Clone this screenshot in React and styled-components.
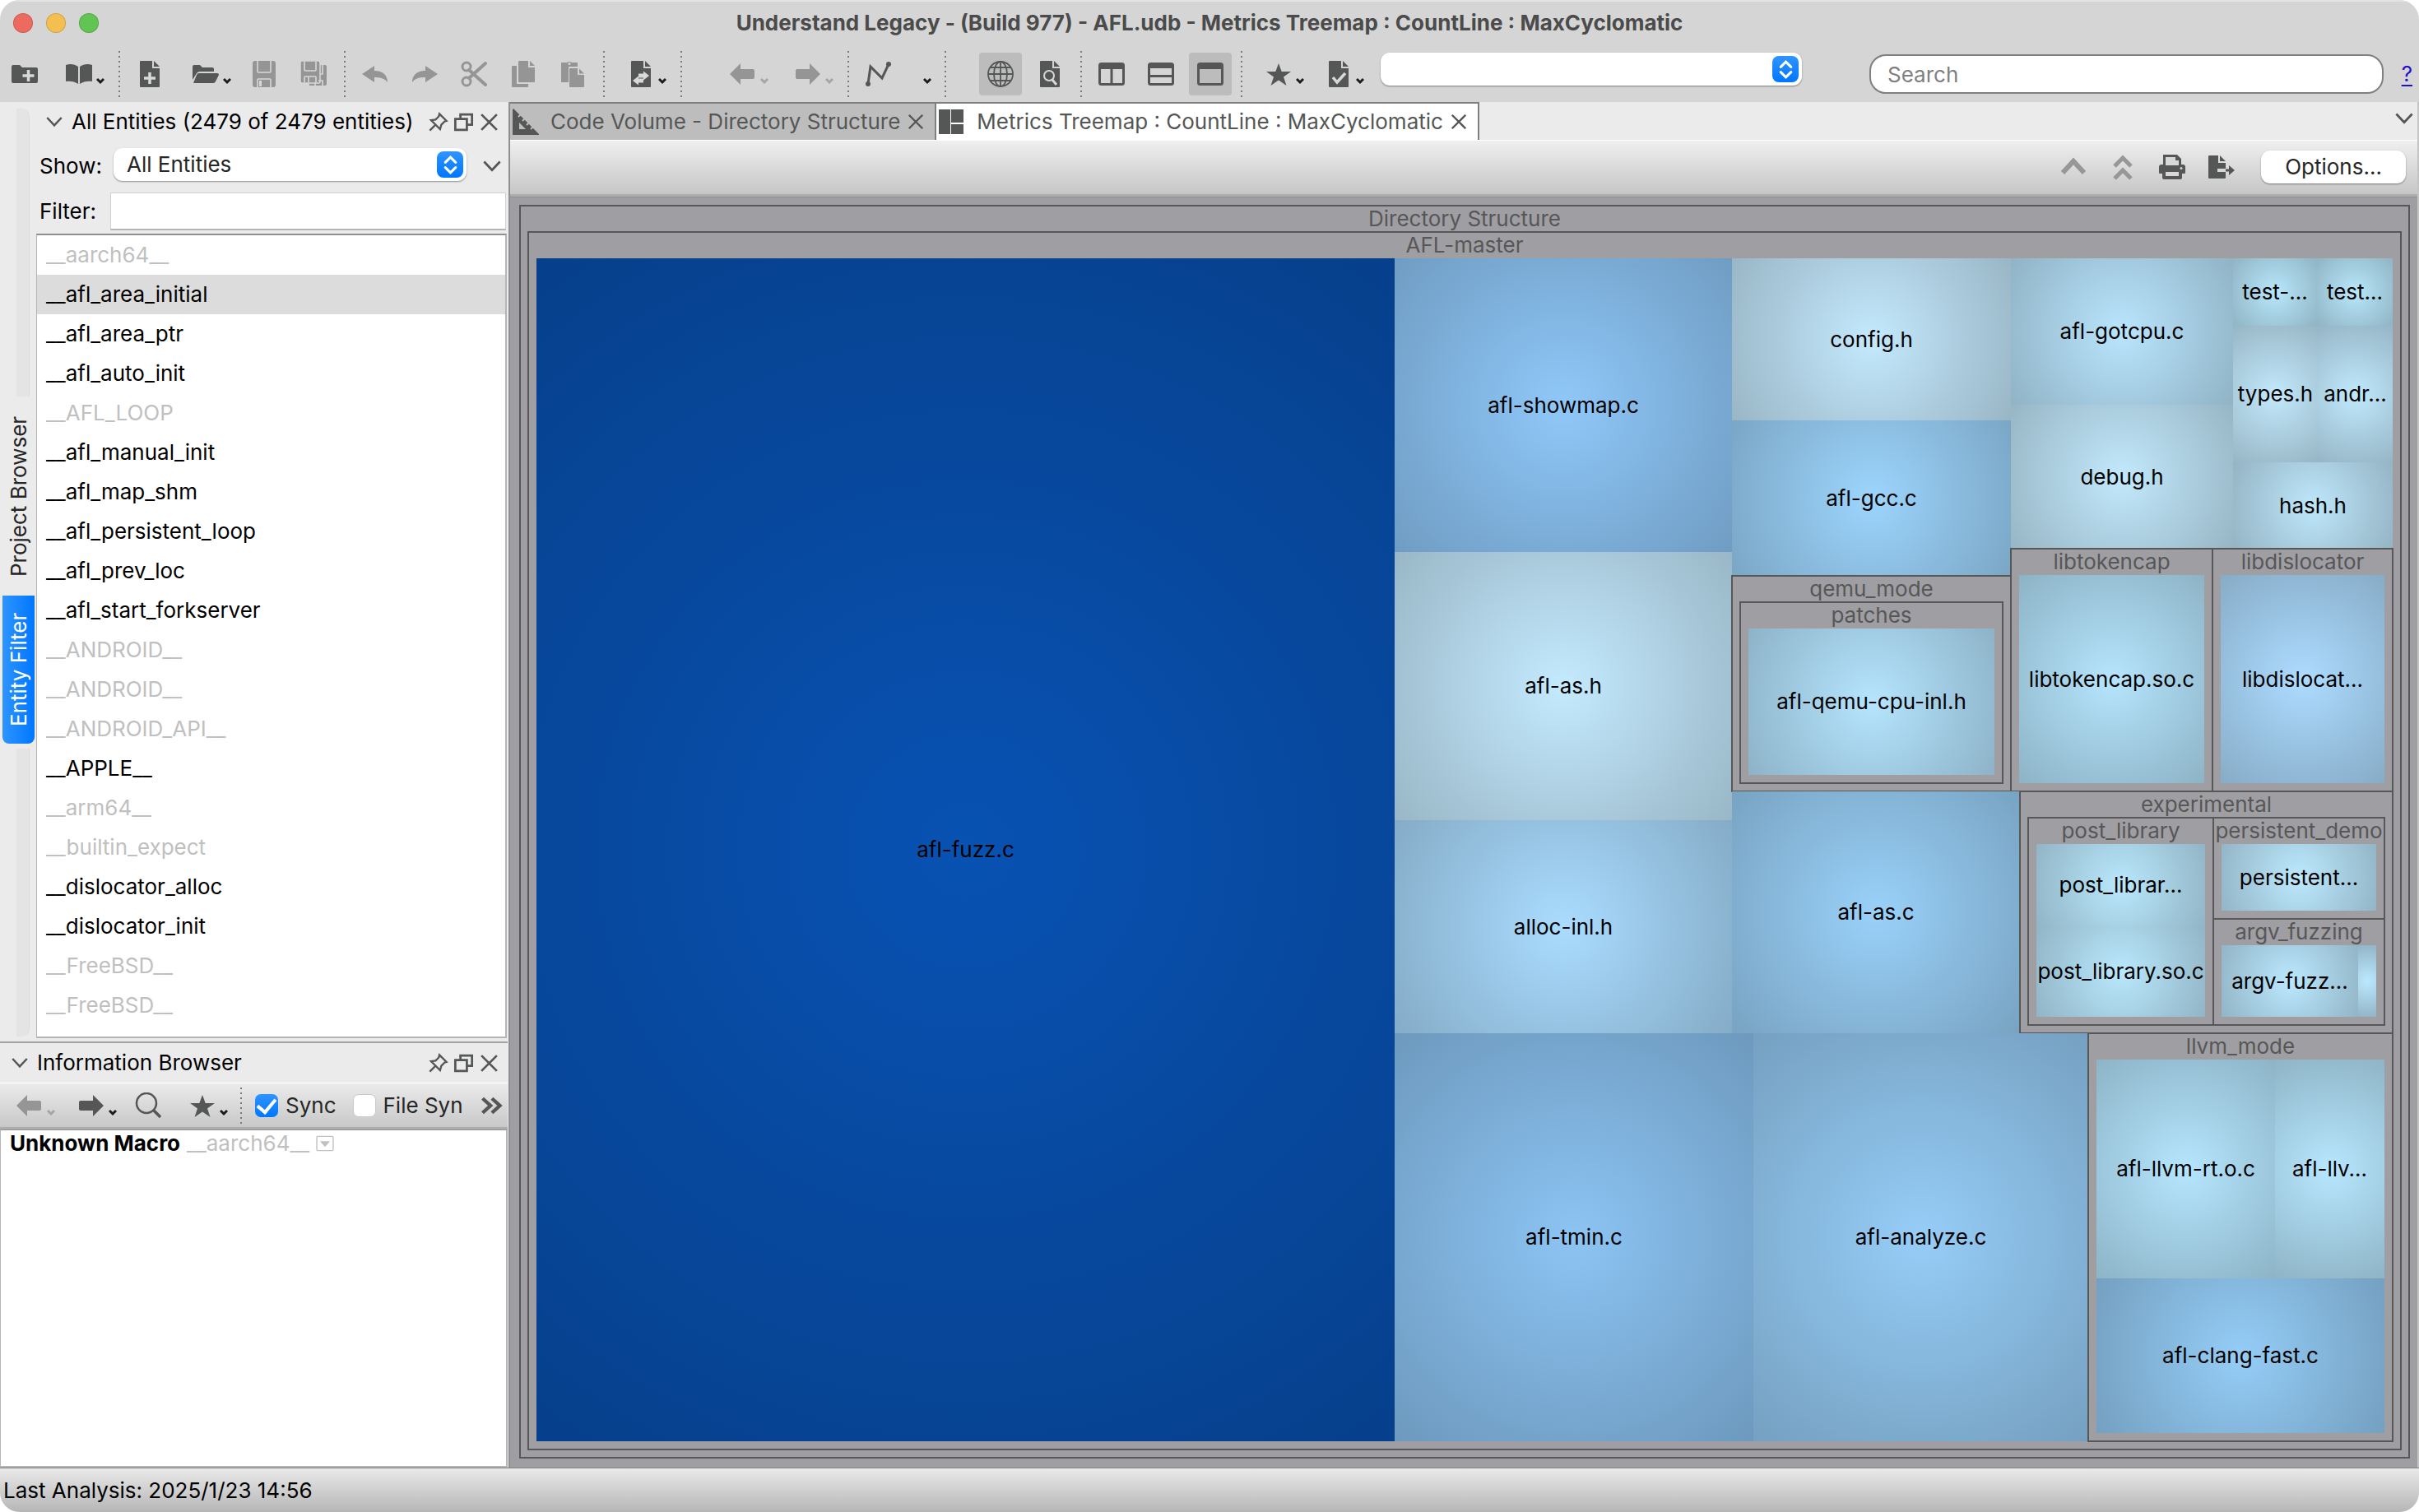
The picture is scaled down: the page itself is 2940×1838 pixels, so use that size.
import React, { useState } from 'react';
import styled, { createGlobalStyle, css } from 'styled-components';


const GlobalStyle = createGlobalStyle`
    * {
        box-sizing: border-box;
    }

    body {
        margin: 0;
        background-color: #ffffff;
        color: #000000;
        font-family: Inter, "Liberation Sans", sans-serif;
        font-size: 26px;
        line-height: 32px;
    }

    button, input, select {
        font: inherit;
        color: inherit;
        margin: 0;
    }
`

const Window = styled.div`
    display: flex;
    flex-direction: column;
    height: 100vh;
    border-radius: 24px;
    overflow: hidden;
    background-color: #ebebeb;
`

/* ---------- title bar and main toolbar ---------- */

const TitleBar = styled.header`
    display: grid;
    grid-template-columns: 1fr auto 1fr;
    align-items: center;
    height: 56px;
    padding: 0 16px;
    background-color: #d5d5d5;
    box-shadow: inset 0 2px 0 #e4e4e4;
`

const Lights = styled.div`
    display: flex;
    gap: 16px;
`

const Light = styled.button`
    width: 24px;
    height: 24px;
    padding: 0;
    border: 1px solid rgba(0, 0, 0, 0.15);
    border-radius: 50%;
    background-color: ${({ $color }) => $color};
`

const Title = styled.h1`
    margin: 0;
    color: #4b4b4b;
    font-size: 26px;
    font-weight: 700;
    line-height: 32px;
    white-space: nowrap;
`

const Toolbar = styled.div`
    display: flex;
    align-items: center;
    height: 68px;
    padding-right: 8px;
    background-color: #d5d5d5;
`

const ToolButton = styled.button`
    display: flex;
    align-items: center;
    gap: 5px;
    flex: none;
    height: 52px;
    padding: 0 ${({ $menu }) => ($menu ? 10 : 14)}px 0 14px;
    border: 0;
    background: none;
    color: ${({ $off }) => ($off ? '#959595' : '#545755')};
`

const PressedButton = styled(ToolButton)`
    margin: 0 4px;
    padding: 0 10px;
    border-radius: 4px;
    background-color: #bcbcbc;
`

const Separator = styled.i`
    flex: none;
    width: 2px;
    height: ${({ $short }) => ($short ? 44 : 56)}px;
    margin: 0 6px 0 7px;
    background: repeating-linear-gradient(#7a7a7a 0 2px, transparent 2px 6px);
`

const Gap = styled.span`
    flex: none;
    width: ${({ $w }) => $w}px;
`

const Svg = styled.svg`
    display: block;
    flex: none;
`

const SelectBox = styled.div`
    position: relative;
    flex: ${({ $wide }) => ($wide ? '0 0 512px' : '1')};
    align-self: ${({ $wide }) => ($wide ? 'flex-start' : 'center')};
    margin-top: ${({ $wide }) => ($wide ? 8 : 0)}px;
    margin-bottom: ${({ $wide }) => ($wide ? 0 : 4)}px;
    height: 40px;

    select {
        appearance: none;
        width: 100%;
        height: 40px;
        padding: 0 48px 0 16px;
        border: 0;
        border-radius: 11px;
        background-color: #ffffff;
        box-shadow: 0 1px 2px rgba(0, 0, 0, 0.4);
        color: #262626;
    }
`

const Stepper = styled.span`
    position: absolute;
    top: 4px;
    right: 4px;
    display: grid;
    place-items: center;
    width: 32px;
    height: 32px;
    border-radius: 8px;
    background: linear-gradient(#2f94ff, #0077ff);
    color: #ffffff;
    pointer-events: none;
`

const SearchInput = styled.input`
    flex: 1;
    min-width: 0;
    height: 48px;
    margin-left: 82px;
    padding: 0 20px;
    border: 2px solid #808080;
    border-radius: 20px;
    background-color: #ffffff;

    &::placeholder {
        color: #7f7f7f;
        opacity: 1;
    }
`

const HelpLink = styled.a`
    margin-left: 22px;
    color: #1f0fc8;
    text-underline-offset: 4px;
`

/* ---------- docks on the left ---------- */

const Body = styled.div`
    flex: 1;
    min-height: 0;
    display: grid;
    grid-template-columns: 620px minmax(0, 1fr);
`

const Docks = styled.aside`
    display: grid;
    grid-template-columns: minmax(0, 1fr);
    grid-template-rows: minmax(0, 1142fr) minmax(0, 518fr);
    min-height: 0;
    padding-right: 1px;
    border-right: 2px solid #8f8f8f;
`

const TopDock = styled.section`
    display: flex;
    min-height: 0;
`

const SideTabs = styled.nav`
    display: flex;
    flex-direction: column;
    flex: none;
    width: 44px;
    padding: 8px 2px 6px 3px;
`

const Track = styled.span`
    flex: 1;
    width: 16px;
    margin-left: 17px;
    border-right: 1px solid #dcdcdc;
    background-color: #e4e4e4;
    border-radius: ${({ $end }) => ($end ? '0 0 10px 0' : '0 10px 0 0')};
`

const SideTab = styled.button`
    writing-mode: vertical-rl;
    transform: rotate(180deg);
    flex: none;
    width: 39px;
    height: ${({ $active }) => ($active ? 180 : 242)}px;
    margin-bottom: ${({ $active }) => ($active ? 6 : 0)}px;
    padding: 0;
    border: 0;
    border-radius: ${({ $active }) => ($active ? '8px 8px 0 0' : '0')};
    background: ${({ $active }) => ($active ? 'linear-gradient(to left, #2f94ff, #0077ff)' : 'none')};
    color: ${({ $active }) => ($active ? '#ffffff' : '#262626')};
    text-align: center;
`

const DockColumn = styled.div`
    display: flex;
    flex-direction: column;
    flex: 1;
    min-width: 0;
    padding-bottom: 4px;
`

const DockHeader = styled.div`
    display: flex;
    align-items: center;
    gap: 6px;
    flex: none;
    height: 48px;
    padding: 0 10px 0 ${({ $inset }) => $inset}px;
    color: #545755;

    h2 {
        flex: 1;
        margin: 0 0 0 5px;
        color: #000000;
        font-size: 26px;
        font-weight: 400;
        line-height: 32px;
        white-space: nowrap;
    }
`

const IconButton = styled.button`
    display: flex;
    flex: none;
    padding: 0;
    border: 0;
    background: none;
    color: #545755;
`

const Field = styled.div`
    display: flex;
    align-items: center;
    flex: none;
    height: ${({ $tall }) => ($tall ? 60 : 50)}px;
    padding: 0 ${({ $tall }) => ($tall ? 8 : 2)}px 0 4px;

    label {
        width: ${({ $tall }) => ($tall ? 90 : 86)}px;
    }
`

const FilterInput = styled.input`
    flex: 1;
    min-width: 0;
    height: 46px;
    padding: 0 8px;
    border: 1px solid #d0d0d0;
    border-bottom: 2px solid #b4b4b4;
    background-color: #ffffff;
`

const EntityList = styled.ul`
    flex: 1;
    min-height: 0;
    margin: 2px 1px 0 0;
    padding: 0;
    border: 2px solid #b5b5b5;
    border-top-color: #8f8f8f;
    border-left-width: 1px;
    background-color: #ffffff;
    list-style: none;
    overflow: hidden;
`

const Entity = styled.li`
    height: 48px;
    padding-left: 11px;
    line-height: 48px;
    color: ${({ $dim }) => ($dim ? '#c0c0c0' : '#000000')};
    background-color: ${({ $selected }) => ($selected ? '#dcdcdc' : 'transparent')};
`

const InfoDock = styled.section`
    display: flex;
    flex-direction: column;
    min-height: 0;
    border-top: 2px solid #a2a2a2;
`

const InfoToolbar = styled.div`
    display: flex;
    align-items: center;
    flex: none;
    height: 57px;
    padding: 0 6px;
    border-top: 1px solid #ffffff;
    border-bottom: 3px solid #adadad;
    background: linear-gradient(#ebebeb, #c8c8c8);
`

const InfoButton = styled(ToolButton)`
    padding: 0 ${({ $menu }) => ($menu ? 8 : 20)}px 0 14px;
`

const CheckLabel = styled.label`
    display: flex;
    align-items: center;
    gap: 9px;
    flex: 0 1 auto;
    margin-right: 20px;
    overflow: hidden;
    white-space: nowrap;
    color: #262626;

    &:first-of-type {
        flex: none;
    }
`

const CheckBox = styled.input`
    appearance: none;
    flex: none;
    display: grid;
    place-items: center;
    width: 28px;
    height: 28px;
    border: 1px solid #c9c9c9;
    border-radius: 7px;
    background-color: #ffffff;

    &:checked {
        border: 0;
        background: linear-gradient(#2f94ff, #0077ff);
    }

    &:checked::after {
        content: '';
        width: 10px;
        height: 18px;
        margin-bottom: 4px;
        border: solid #ffffff;
        border-width: 0 4px 4px 0;
        transform: rotate(40deg);
    }
`

const InfoText = styled.div`
    display: flex;
    align-items: flex-start;
    gap: 8px;
    flex: 1;
    padding: 0 11px;
    border: 2px solid #b5b5b5;
    border-top: 1px solid #8f8f8f;
    border-left-width: 1px;
    background-color: #ffffff;
    color: #c0c0c0;

    strong {
        color: #000000;
    }

    svg {
        margin-top: 5px;
    }
`

/* ---------- document area ---------- */

const Documents = styled.main`
    display: flex;
    flex-direction: column;
    min-width: 0;
    min-height: 0;
    border-right: 2px solid #c4c4c4;
`

const TabBar = styled.div`
    display: flex;
    flex: none;
    height: 47px;
    border-bottom: 1px solid #ffffff;
    color: #545755;
`

const Tab = styled.div`
    display: flex;
    align-items: center;
    padding: 0 12px 0 3px;
    border-top: 2px solid #7f7f7f;
    border-right: 2px solid #7f7f7f;
    background-color: ${({ $active }) => ($active ? '#ffffff' : '#bdbdbd')};
    white-space: nowrap;

    span {
        margin: 0 8px 0 14px;
    }
`

const TabMenu = styled(IconButton)`
    margin: 9px 5px 0 auto;
    align-self: flex-start;
`

const ViewToolbar = styled.div`
    display: flex;
    align-items: center;
    justify-content: flex-end;
    gap: 28px;
    flex: none;
    height: 68px;
    padding: 0 14px 2px 0;
    border-bottom: 3px solid #adadad;
    background: linear-gradient(#efefef, #c6c6c6);
`

const ViewButton = styled(IconButton)`
    color: ${({ $off }) => ($off ? '#979797' : '#545755')};
`

const OptionsButton = styled.button`
    width: 176px;
    height: 40px;
    margin-left: 4px;
    padding: 0;
    border: 0;
    border-radius: 11px;
    background-color: #ffffff;
    box-shadow: 0 1px 2px rgba(0, 0, 0, 0.4);
    color: #262626;
`

const Canvas = styled.div`
    flex: 1;
    min-height: 0;
    display: grid;
    padding: 10px 10px 12px 12px;
    border-top: 1px solid #8f8f8f;
    background-color: #9f9ea3;
`

const Group = styled.div`
    display: grid;
    grid-template-rows: 32px minmax(0, 1fr);
    min-width: 0;
    min-height: 0;
    padding: 0 10px 10px;
    background-color: #9f9ea3;
    outline: 2px solid #565756;
    outline-offset: -1px;
`

const GroupName = styled.div`
    margin: 0 -10px;
    color: #565756;
    text-align: center;
    white-space: nowrap;
`

const Split = styled.div`
    display: grid;
    min-width: 0;
    min-height: 0;
    ${({ $across, $tracks }) => ($across
        ? css`grid-template-columns: ${$tracks}; grid-template-rows: minmax(0, 1fr);`
        : css`grid-template-rows: ${$tracks}; grid-template-columns: minmax(0, 1fr);`)}
`

const Leaf = styled.div`
    display: grid;
    place-items: center;
    min-width: 0;
    min-height: 0;
    overflow: hidden;
    background: radial-gradient(
        circle farthest-corner,
        ${({ $color }) => $color},
        color-mix(in srgb, ${({ $color }) => $color} 78%, #000000)
    );
    white-space: nowrap;
`

const StatusBar = styled.footer`
    flex: none;
    height: 54px;
    padding-left: 4px;
    border-top: 1px solid #7f7f7f;
    background: linear-gradient(#e9e9e9, #b6b6b6);
    line-height: 53px;
`

/* ---------- icons ---------- */

const CUT = '#d8d8d8';

const page = (
    <>
        <path d="M5 0H19V9H28V31a1 1 0 0 1-1 1H5a1 1 0 0 1-1-1V1a1 1 0 0 1 1-1z" />
        <path d="M21 0L28 7H21z" />
    </>
);

const frame = <rect x="1.5" y="3.5" width="29" height="25" rx="2" fill="none" stroke="currentColor" strokeWidth="3" />;

const icons = {
    folderPlus: (
        <>
            <path d="M0 7a2 2 0 0 1 2-2h8l3 3h17a2 2 0 0 1 2 2v15a2 2 0 0 1-2 2H2a2 2 0 0 1-2-2z" />
            <path d="M20.500 11v14M13.500 18h14" stroke={CUT} strokeWidth="3.500" />
        </>
    ),
    book: <path d="M0 5C5 3 11 4 15 7V28C11 25 5 24 0 25zM32 5C27 3 21 4 17 7V28C21 25 27 24 32 25z" />,
    filePlus: <>{page}<path d="M16 14v14M9 21h14" stroke={CUT} strokeWidth="3.500" /></>,
    folderOpen: (
        <>
            <path d="M0 23V7a2 2 0 0 1 2-2h7l3 3h12a2 2 0 0 1 2 2v3H9a5 5 0 0 0-4 2z" />
            <path d="M8 15H30a2 2 0 0 1 2 2l-4 8a3 3 0 0 1-3 2H1L5 17a3 3 0 0 1 3-2z" />
        </>
    ),
    save: (
        <>
            <rect x="2" y="0" width="28" height="32" rx="3" />
            <path d="M8 0V13a1 1 0 0 0 1 1H23a1 1 0 0 0 1-1V0M8 32V23a1 1 0 0 1 1-1H23a1 1 0 0 1 1 1V32" fill="none" stroke={CUT} strokeWidth="1.600" />
            <path d="M10 24h3v7h-3z" fill={CUT} />
        </>
    ),
    saveAll: (
        <>
            <path d="M11 5H30a2 2 0 0 1 2 2V28a2 2 0 0 1-2 2H11z" />
            <rect x="0" y="0" width="24" height="27" rx="2" stroke={CUT} strokeWidth="1.500" />
            <path d="M5 1V11a1 1 0 0 0 1 1H18a1 1 0 0 0 1-1V1M5 26V20a1 1 0 0 1 1-1H18a1 1 0 0 1 1 1V26M10 19V26M27 5V16H24M27 30V24H22M18 30v-4" fill="none" stroke={CUT} strokeWidth="1.600" />
        </>
    ),
    undo: <path d="M0 16L15 6V12C26 12 31 18 31 26C27 21 22 20 15 20V26z" />,
    redo: <path d="M32 16L17 6V12C6 12 1 18 1 26C5 21 10 20 17 20V26z" />,
    cut: (
        <g fill="none" stroke="currentColor">
            <circle cx="7" cy="7" r="5" strokeWidth="3" />
            <circle cx="7" cy="25" r="5" strokeWidth="3" />
            <path d="M10 21L30 3M10 11L30 29" strokeWidth="4" strokeLinecap="round" />
        </g>
    ),
    copy: (
        <>
            <path d="M3 6H8V28H22V31a1 1 0 0 1-1 1H3a1 1 0 0 1-1-1V7a1 1 0 0 1 1-1z" />
            <path d="M11 0H22V8H30V25a1 1 0 0 1-1 1H11a1 1 0 0 1-1-1V1a1 1 0 0 1 1-1z" />
            <path d="M24 0L30 6H24z" />
        </>
    ),
    paste: (
        <>
            <path d="M3 2H9a4 3 0 0 1 6 0H21a1 1 0 0 1 1 1V7H11V26H3a1 1 0 0 1-1-1V3a1 1 0 0 1 1-1z" />
            <circle cx="12" cy="3.500" r="1.500" fill={CUT} />
            <path d="M13 9H22V17H30V31a1 1 0 0 1-1 1H13a1 1 0 0 1-1-1V10a1 1 0 0 1 1-1z" />
            <path d="M24 9.500L30 15.500H24z" />
        </>
    ),
    fileSwap: (
        <>
            {page}
            <path d="M13 15.500h6v-3l7 5.500-7 5.500v-3h-6zM19 26.500h-6v3l-7-5.500 7-5.500v3h6z" fill={CUT} />
        </>
    ),
    back: <path d="M0 16L13 3V10H28a2 2 0 0 1 2 2V20a2 2 0 0 1-2 2H13V29z" />,
    forward: <path d="M31 16L18 3V10H3a2 2 0 0 0-2 2V20a2 2 0 0 0 2 2H18V29z" />,
    graph: (
        <>
            <path d="M3 28L6 7L20 21L28 4" fill="none" stroke="currentColor" strokeWidth="3" />
            <circle cx="3" cy="28" r="3" />
            <circle cx="28" cy="4" r="3" />
        </>
    ),
    globe: (
        <g fill="none" stroke="currentColor" strokeWidth="1.800">
            <circle cx="16" cy="16" r="15" />
            <ellipse cx="16" cy="16" rx="8" ry="15" />
            <path d="M16 1V31M1 16H31M4 8H28M4 24H28" />
        </g>
    ),
    fileSearch: (
        <>
            {page}
            <g fill="none" stroke={CUT} strokeWidth="2">
                <circle cx="15" cy="18" r="6" />
                <path d="M19 23L24 29" strokeWidth="3" />
            </g>
        </>
    ),
    splitV: <>{frame}<path d="M1 3H31V10H1zM14.500 8h3V28h-3z" /></>,
    splitH: <>{frame}<path d="M1 3H31V9H1zM1 17h30v3H1z" /></>,
    single: <>{frame}<path d="M1 3H31V10H1z" /></>,
    star: <path d="M16 3L19.700 13H31L22 19.500L25.500 30L16 23.500L6.500 30L10 19.500L1 13H12.300z" />,
    fileCheck: <>{page}<path d="M9 20L14 26L24 15" fill="none" stroke={CUT} strokeWidth="3.500" /></>,
    search: (
        <g fill="none" stroke="currentColor">
            <circle cx="14" cy="13" r="12" strokeWidth="2.500" />
            <path d="M22 21L31 30" strokeWidth="3.500" />
        </g>
    ),
    up: <path d="M3 23L16 9L29 23" fill="none" stroke="currentColor" strokeWidth="6" />,
    top: <path d="M6 15L16 5L26 15M6 30L16 20L26 30" fill="none" stroke="currentColor" strokeWidth="5" />,
    print: (
        <>
            <path d="M5 1H22L27 6V13H29a3 3 0 0 1 3 3V23a1 1 0 0 1-1 1H28V29a2 2 0 0 1-2 2H6a2 2 0 0 1-2-2V24H1a1 1 0 0 1-1-1V16a3 3 0 0 1 3-3H5z" />
            <path d="M8 4H20V8H24V14H8zM8 22H24V27H8z" fill={CUT} />
            <circle cx="27" cy="17.500" r="1.500" fill={CUT} />
        </>
    ),
    exportFile: (
        <>
            <path d="M1 2H12V11H21V18H11V22H21V29a1 1 0 0 1-1 1H1a1 1 0 0 1-1-1V3a1 1 0 0 1 1-1z" />
            <path d="M14 2L21 9H14zM21 18.500H25V14L32 20L25 26V21.500H21z" />
        </>
    ),
    ruler: (
        <>
            <path fillRule="evenodd" d="M1 0L32 31V32H0V1zM8 17V25H16z" />
            <path d="M7 10L10 7M12 15L15 12M17 20L20 17M22 25L25 22" stroke="#bdbdbd" strokeWidth="2" />
        </>
    ),
    treemap: <path d="M0 1H14V31H0zM15 1H30V17H15zM15 19H30V31H15z" />,
    pin: (
        <g fill="none" stroke="currentColor" strokeWidth="3">
            <path d="M18 3L29 14L26 15L21 20L19 27L5 13L12 12L17 7z" />
            <path d="M12 20L3 29" />
        </g>
    ),
    float: <path d="M11 10V4H29V20H22M3 11H21V28H3z" fill="none" stroke="currentColor" strokeWidth="3.500" />,
    close: <path d="M4 4L28 28M28 4L4 28" fill="none" stroke="currentColor" strokeWidth="3.500" />,
    chevron: <path d="M2 8L16 23L30 8" fill="none" stroke="currentColor" strokeWidth="4" />,
    more: <path d="M4 6L15 16L4 26M17 6L28 16L17 26" fill="none" stroke="currentColor" strokeWidth="5" />,
    updown: <path d="M8 12L16 4L24 12M8 20L16 28L24 20" fill="none" stroke="currentColor" strokeWidth="4" strokeLinecap="round" />,
    box: (
        <>
            <rect x="1.500" y="3.500" width="29" height="25" rx="2" fill="none" stroke="currentColor" strokeWidth="2" />
            <path d="M7 12H25L16 22z" />
        </>
    ),
};

const Icon = ({ name, size = 32 }) => (
    <Svg width={size} height={size} viewBox="0 0 32 32" fill="currentColor" aria-hidden="true">
        {icons[name]}
    </Svg>
);

const Caret = ({ off }) => (
    <Svg width="10" height="32" viewBox="0 0 10 32" fill="none" stroke={off ? '#a5a5a5' : '#1c1c1c'} strokeWidth="3" aria-hidden="true">
        <path d="M1 22L5 26L9 22" />
    </Svg>
);

const Tool = ({ icon, label, off, menu, as: Base = ToolButton }) => (
    <Base type="button" aria-label={label} $off={off} $menu={menu}>
        <Icon name={icon} />
        {menu && <Caret off={off} />}
    </Base>
);

const ToolbarIcon = ({ name, label, off }) => (
    <ViewButton type="button" aria-label={label} $off={off}><Icon name={name} /></ViewButton>
);

/* ---------- data ---------- */

const entities = [
    ['__aarch64__', true],
    ['__afl_area_initial'],
    ['__afl_area_ptr'],
    ['__afl_auto_init'],
    ['__AFL_LOOP', true],
    ['__afl_manual_init'],
    ['__afl_map_shm'],
    ['__afl_persistent_loop'],
    ['__afl_prev_loc'],
    ['__afl_start_forkserver'],
    ['__ANDROID__', true],
    ['__ANDROID__', true],
    ['__ANDROID_API__', true],
    ['__APPLE__'],
    ['__arm64__', true],
    ['__builtin_expect', true],
    ['__dislocator_alloc'],
    ['__dislocator_init'],
    ['__FreeBSD__', true],
    ['__FreeBSD__', true],
    ['__FreeBSD__', true],
];

const leaf = (size, name, color) => ({ size, name, color });
const group = (size, name, child) => ({ size, name, child });
const row = (size, ...items) => ({ size, items, across: true });
const column = (size, ...items) => ({ size, items });

const tree = group(1, 'Directory Structure', group(1, 'AFL-master', row(1,
    leaf(1043, 'afl-fuzz.c', '#0852b3'),
    column(1213,
        row(942,
            column(410,
                leaf(357, 'afl-showmap.c', '#8fc8f9'),
                leaf(326, 'afl-as.h', '#c4eafe'),
                leaf(259, 'alloc-inl.h', '#aadcff'),
            ),
            column(803,
                row(648,
                    column(339,
                        leaf(197, 'config.h', '#c4e9fd'),
                        leaf(189, 'afl-gcc.c', '#9dd5fd'),
                        group(262, 'qemu_mode', group(1, 'patches',
                            leaf(1, 'afl-qemu-cpu-inl.h', '#b5e5ff'))),
                    ),
                    column(464,
                        row(353,
                            column(270,
                                leaf(178, 'afl-gotcpu.c', '#b9e5fd'),
                                leaf(175, 'debug.h', '#c2e9fc'),
                            ),
                            column(194,
                                row(82,
                                    leaf(102, 'test-...', '#b8e7fb'),
                                    leaf(92, 'test...', '#b8e7fb'),
                                ),
                                row(166,
                                    leaf(103, 'types.h', '#c2e9fc'),
                                    leaf(91, 'andr...', '#c0e9fd'),
                                ),
                                leaf(105, 'hash.h', '#bee7fb'),
                            ),
                        ),
                        row(295,
                            group(245, 'libtokencap', leaf(1, 'libtokencap.so.c', '#b5e5fd')),
                            group(219, 'libdislocator', leaf(1, 'libdislocat...', '#addcff')),
                        ),
                    ),
                ),
                row(294,
                    leaf(350, 'afl-as.c', '#9ad1f9'),
                    group(453, 'experimental', row(1,
                        group(225, 'post_library', column(1,
                            leaf(100, 'post_librar...', '#bae8fd'),
                            leaf(110, 'post_library.so.c', '#bae8fd'),
                        )),
                        column(208,
                            group(123, 'persistent_demo', leaf(1, 'persistent...', '#bce9fe')),
                            group(129, 'argv_fuzzing', row(1,
                                leaf(166, 'argv-fuzz...', '#bbe8fe'),
                                leaf(22, '', '#bbe8fe'),
                            )),
                        ),
                    )),
                ),
            ),
        ),
        row(496,
            leaf(436, 'afl-tmin.c', '#8cc4f3'),
            leaf(407, 'afl-analyze.c', '#96cdf7'),
            group(370, 'llvm_mode', column(1,
                row(266,
                    leaf(217, 'afl-llvm-rt.o.c', '#b5e6fe'),
                    leaf(133, 'afl-llv...', '#b7e7fe'),
                ),
                leaf(188, 'afl-clang-fast.c', '#95cdf7'),
            )),
        ),
    ),
)));

const TreeNode = ({ node }) => {
    if (node.items) {
        return (
            <Split $across={node.across} $tracks={node.items.map((n) => `minmax(0, ${n.size}fr)`).join(' ')}>
                {node.items.map((n, i) => <TreeNode key={i} node={n} />)}
            </Split>
        );
    }
    if (node.child) {
        return (
            <Group>
                <GroupName>{node.name}</GroupName>
                <TreeNode node={node.child} />
            </Group>
        );
    }
    return <Leaf $color={node.color}>{node.name}</Leaf>;
};

const HeaderButtons = () => (
    <>
        <IconButton type="button" aria-label="Pin"><Icon name="pin" size={25} /></IconButton>
        <IconButton type="button" aria-label="Float"><Icon name="float" size={25} /></IconButton>
        <IconButton type="button" aria-label="Close"><Icon name="close" size={25} /></IconButton>
    </>
);

const App = () => {
    const [sync, setSync] = useState(true);
    const [fileSync, setFileSync] = useState(false);

    return (
        <Window>
            <GlobalStyle />
            <TitleBar>
                <Lights>
                    <Light type="button" aria-label="Close window" $color="#ed6a5e" />
                    <Light type="button" aria-label="Minimise" $color="#f5bf4f" />
                    <Light type="button" aria-label="Zoom" $color="#61c554" />
                </Lights>
                <Title>Understand Legacy - (Build 977) - AFL.udb - Metrics Treemap : CountLine : MaxCyclomatic</Title>
            </TitleBar>
            <Toolbar>
                <Tool icon="folderPlus" label="New project" />
                <Gap $w={6} />
                <Tool icon="book" label="Recent projects" menu />
                <Separator />
                <Tool icon="filePlus" label="New file" />
                <Gap $w={8} />
                <Tool icon="folderOpen" label="Open file" menu />
                <Tool icon="save" label="Save" off />
                <Tool icon="saveAll" label="Save all" off />
                <Separator />
                <Tool icon="undo" label="Undo" off />
                <Tool icon="redo" label="Redo" off />
                <Tool icon="cut" label="Cut" off />
                <Tool icon="copy" label="Copy" off />
                <Tool icon="paste" label="Paste" off />
                <Separator />
                <Gap $w={8} />
                <Tool icon="fileSwap" label="Swap file" menu />
                <Separator />
                <Gap $w={38} />
                <Tool icon="back" label="Back" off menu />
                <Gap $w={8} />
                <Tool icon="forward" label="Forward" off menu />
                <Separator />
                <Tool icon="graph" label="Graphs" />
                <Gap $w={24} />
                <Caret />
                <Gap $w={9} />
                <Separator />
                <Gap $w={30} />
                <Tool icon="globe" label="Browse" as={PressedButton} />
                <Tool icon="fileSearch" label="Find in files" />
                <Separator />
                <Tool icon="splitV" label="Split vertically" />
                <Tool icon="splitH" label="Split horizontally" />
                <Tool icon="single" label="Single view" as={PressedButton} />
                <Separator />
                <Gap $w={8} />
                <Tool icon="star" label="Favorites" menu />
                <Gap $w={2} />
                <Tool icon="fileCheck" label="Code check" menu />
                <Gap $w={10} />
                <SelectBox $wide>
                    <select aria-label="Check configuration"><option /></select>
                    <Stepper><Icon name="updown" size={25} /></Stepper>
                </SelectBox>
                <SearchInput type="search" placeholder="Search" aria-label="Search" />
                <HelpLink href="#help">?</HelpLink>
            </Toolbar>

            <Body>
                <Docks>
                    <TopDock>
                        <SideTabs>
                            <Track />
                            <SideTab type="button">Project Browser</SideTab>
                            <SideTab type="button" $active>Entity Filter</SideTab>
                            <Track $end />
                        </SideTabs>
                        <DockColumn>
                            <DockHeader $inset={12}>
                                <Icon name="chevron" size={20} />
                                <h2>All Entities (2479 of 2479 entities)</h2>
                                <HeaderButtons />
                            </DockHeader>
                            <Field $tall>
                                <label htmlFor="show">Show:</label>
                                <SelectBox>
                                    <select id="show"><option>All Entities</option></select>
                                    <Stepper><Icon name="updown" size={25} /></Stepper>
                                </SelectBox>
                                <Gap $w={20} />
                                <IconButton type="button" aria-label="More filters"><Icon name="chevron" size={22} /></IconButton>
                            </Field>
                            <Field>
                                <label htmlFor="filter">Filter:</label>
                                <FilterInput id="filter" type="text" />
                            </Field>
                            <EntityList>
                                {entities.map(([name, dim], i) => (
                                    <Entity key={i} $dim={dim} $selected={i === 1}>{name}</Entity>
                                ))}
                            </EntityList>
                        </DockColumn>
                    </TopDock>
                    <InfoDock>
                        <DockHeader $inset={14}>
                            <Icon name="chevron" size={20} />
                            <h2>Information Browser</h2>
                            <HeaderButtons />
                        </DockHeader>
                        <InfoToolbar>
                            <Tool icon="back" label="Back" off menu as={InfoButton} />
                            <Gap $w={6} />
                            <Tool icon="forward" label="Forward" menu as={InfoButton} />
                            <Tool icon="search" label="Search" as={InfoButton} />
                            <Tool icon="star" label="Favorites" menu as={InfoButton} />
                            <Separator $short />
                            <Gap $w={10} />
                            <CheckLabel>
                                <CheckBox type="checkbox" checked={sync} onChange={() => setSync(!sync)} />
                                Sync
                            </CheckLabel>
                            <CheckLabel>
                                <CheckBox type="checkbox" checked={fileSync} onChange={() => setFileSync(!fileSync)} />
                                File Sync
                            </CheckLabel>
                            <IconButton type="button" aria-label="More tools"><Icon name="more" size={28} /></IconButton>
                        </InfoToolbar>
                        <InfoText>
                            <strong>Unknown Macro</strong>
                            <span>__aarch64__</span>
                            <Icon name="box" size={22} />
                        </InfoText>
                    </InfoDock>
                </Docks>

                <Documents>
                    <TabBar>
                        <Tab>
                            <Icon name="ruler" />
                            <span>Code Volume - Directory Structure</span>
                            <IconButton type="button" aria-label="Close tab"><Icon name="close" size={22} /></IconButton>
                        </Tab>
                        <Tab $active>
                            <Icon name="treemap" />
                            <span>Metrics Treemap : CountLine : MaxCyclomatic</span>
                            <IconButton type="button" aria-label="Close tab"><Icon name="close" size={22} /></IconButton>
                        </Tab>
                        <TabMenu type="button" aria-label="All tabs"><Icon name="chevron" size={22} /></TabMenu>
                    </TabBar>
                    <ViewToolbar>
                        <ToolbarIcon name="up" label="Up one level" off />
                        <ToolbarIcon name="top" label="To the top" off />
                        <ToolbarIcon name="print" label="Print" />
                        <ToolbarIcon name="exportFile" label="Export" />
                        <OptionsButton type="button">Options...</OptionsButton>
                    </ViewToolbar>
                    <Canvas>
                        <TreeNode node={tree} />
                    </Canvas>
                </Documents>
            </Body>
            <StatusBar>Last Analysis: 2025/1/23 14:56</StatusBar>
        </Window>
    );
};

export default App;
